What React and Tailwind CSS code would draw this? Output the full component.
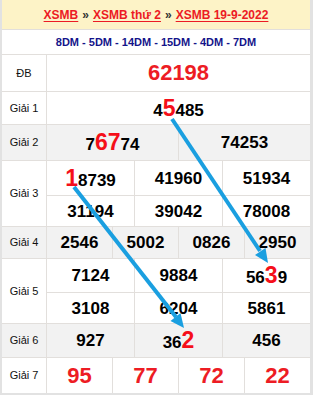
import React from "react";

const F = "font-['Liberation_Sans',Arial,sans-serif]";
const LINE = "border-[#e2dfdc]";

function Label({ children }) {
  return (
    <div className={`w-[45px] shrink-0 border-r ${LINE} flex items-center justify-center text-[11px] text-[#111]`}>
      {children}
    </div>
  );
}

function Num({ children, big, last, className = "" }) {
  return (
    <div
      className={`flex-1 min-w-0 flex items-center justify-center font-bold ${big ? "text-[22px] text-[#ed1c24]" : "text-[17px] text-black"} ${last ? "" : `border-r ${LINE}`} ${className}`}
    >
      <span className="leading-none">{children}</span>
    </div>
  );
}

function R({ children }) {
  return <span className="text-[23px] font-bold text-[#f50f1a] leading-none">{children}</span>;
}

function Cells({ items, big }) {
  return (
    <div className="flex flex-1 h-full">
      {items.map((it, i) => (
        <Num key={i} big={big} last={i === items.length - 1}>
          {it}
        </Num>
      ))}
    </div>
  );
}

export default function App() {
  return (
    <div className={`w-[316px] h-[396px] bg-white ${F}`}>
      <div className={`relative w-[313px] border-l-2 border-r-[3px] border-b-2 border-[#e2e2e2]`}>
        {/* header */}
        <div className={`h-[30px] bg-[#fdf3c7] border-b ${LINE} flex items-center justify-center text-[12px] font-bold`}>
          <span className="text-[#ec1b24] underline decoration-1 underline-offset-2">XSMB</span>
          <span className="text-[#333] mx-[4px]">»</span>
          <span className="text-[#ec1b24] underline decoration-1 underline-offset-2">XSMB thứ 2</span>
          <span className="text-[#333] mx-[4px]">»</span>
          <span className="text-[#ec1b24] underline decoration-1 underline-offset-2">XSMB 19-9-2022</span>
        </div>
        {/* sub header */}
        <div className={`h-[25px] border-b ${LINE} flex items-center justify-center text-[11px] font-bold text-[#14148a]`}>
          8DM - 5DM - 14DM - 15DM - 4DM - 7DM
        </div>
        {/* DB */}
        <div className={`flex h-[37px] border-b ${LINE}`}>
          <Label>ĐB</Label>
          <Cells items={["62198"]} big />
        </div>
        {/* G1 */}
        <div className={`flex h-[33px] border-b ${LINE}`}>
          <Label>Giải 1</Label>
          <Cells items={[<>4<R>5</R>485</>]} />
        </div>
        {/* G2 */}
        <div className={`flex h-[36px] border-b ${LINE} bg-[#f2f2f2]`}>
          <Label>Giải 2</Label>
          <Cells items={[<>7<R>67</R>74</>, "74253"]} />
        </div>
        {/* G3 */}
        <div className={`flex h-[66px] border-b ${LINE}`}>
          <Label>Giải 3</Label>
          <div className="flex-1 flex flex-col">
            <div className={`h-[35px] flex border-b ${LINE}`}>
              <Cells items={[<><R>1</R>8739</>, "41960", "51934"]} />
            </div>
            <div className="flex-1 flex">
              <Cells items={["31194", "39042", "78008"]} />
            </div>
          </div>
        </div>
        {/* G4 */}
        <div className={`flex h-[32px] border-b ${LINE} bg-[#f2f2f2]`}>
          <Label>Giải 4</Label>
          <Cells items={["2546", "5002", "0826", "2950"]} />
        </div>
        {/* G5 */}
        <div className={`flex h-[65px] border-b ${LINE}`}>
          <Label>Giải 5</Label>
          <div className="flex-1 flex flex-col">
            <div className={`h-[34px] flex border-b ${LINE}`}>
              <Cells items={["7124", "9884", <>56<R>3</R>9</>]} />
            </div>
            <div className="flex-1 flex">
              <Cells items={["3108", "6204", "5861"]} />
            </div>
          </div>
        </div>
        {/* G6 */}
        <div className={`flex h-[34px] border-b ${LINE} bg-[#f2f2f2]`}>
          <Label>Giải 6</Label>
          <Cells items={["927", <>36<R>2</R></>, "456"]} />
        </div>
        {/* G7 */}
        <div className="flex h-[35px]">
          <Label>Giải 7</Label>
          <Cells items={["95", "77", "72", "22"]} big />
        </div>

        {/* arrows overlay */}
        <svg
          className="absolute left-[-2px] top-0 pointer-events-none"
          width="316"
          height="396"
          viewBox="0 0 316 396"
        >
          <line x1="172" y1="119" x2="260" y2="251" stroke="#1a9fe0" strokeWidth="4" />
          <polygon points="268,263 255,255 265.5,248" fill="#1a9fe0" />
          <line x1="74" y1="187" x2="176" y2="317" stroke="#1a9fe0" strokeWidth="4" />
          <polygon points="184,328 170.5,321 180.5,313" fill="#1a9fe0" />
        </svg>
      </div>
    </div>
  );
}
